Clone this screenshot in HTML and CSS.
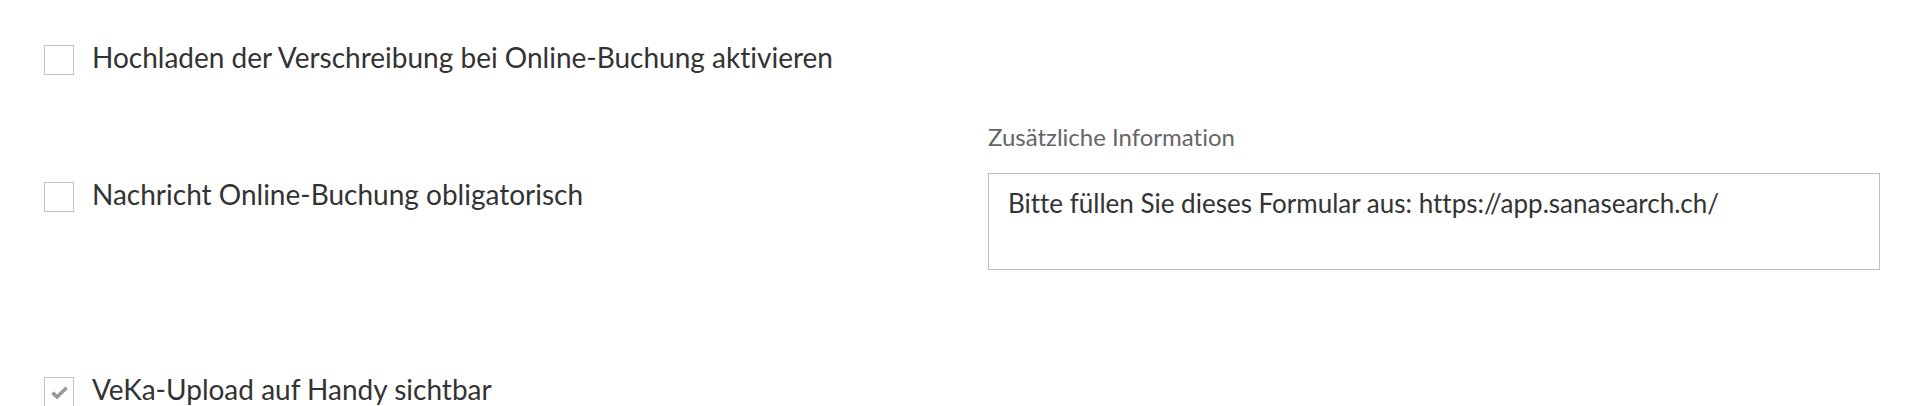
FILE: index.html
```html
<!DOCTYPE html>
<html lang="de">
<head>
    <meta charset="UTF-8">
    <meta name="viewport" content="width=device-width, initial-scale=1.0">
    <title>Online-Buchung Einstellungen</title>
    <link rel="stylesheet" href="styles.css">
</head>
<body>
    <div id="settings">
        <!-- Upload -->
        <div class="row first">
            <label class="check">
                <span class="box"></span>
                <span class="text">Hochladen der Verschreibung bei Online-Buchung aktivieren</span>
            </label>
            <div></div>
        </div>
        <!-- Nachricht -->
        <div class="row second">
            <label class="check">
                <span class="box"></span>
                <span class="text">Nachricht Online-Buchung obligatorisch</span>
            </label>
            <div class="field">
                <label class="field-label" for="info">Zusätzliche Information</label>
                <textarea id="info">Bitte füllen Sie dieses Formular aus: https://app.sanasearch.ch/</textarea>
            </div>
        </div>
        <!-- VeKa -->
        <div class="row third">
            <label class="check">
                <span class="box checked">
                    <svg width="17" height="13" viewBox="0 0 17 13"><path d="M1.5 6.6 L6 11 L15.6 1.8" fill="none" stroke="#999" stroke-width="3.6" stroke-linejoin="miter"/></svg>
                </span>
                <span class="text">VeKa-Upload auf Handy sichtbar</span>
            </label>
            <div></div>
        </div>
    </div>
</body>
</html>
```

FILE: styles.css
```css
/* styles.css */
body {
font-family: Lato, "Open Sans", sans-serif;
font-variant-ligatures: none;
color: #333;
background-color: #fff;
margin: 0;
}

#settings {
padding: 45px 44px 0;
}

.row {
display: grid;
grid-template-columns: 892px 892px;
column-gap: 52px;
align-items: start;
}

.second {
margin-top: 49px;
}

.second .check {
margin-top: 58px;
}

.third {
margin-top: 107px;
}

.check {
display: flex;
align-items: flex-start;
gap: 18px;
}

.box {
width: 30px;
height: 30px;
box-sizing: border-box;
border: 1px solid #c2c2c2;
background-color: #fff;
display: flex;
justify-content: center;
align-items: center;
flex-shrink: 0;
}

.text {
font-size: 28px;
line-height: 28px;
margin-top: -2px;
}

.field-label {
display: block;
font-size: 24px;
line-height: 26px;
color: #666;
margin-bottom: 23px;
}

textarea {
display: block;
width: 892px;
height: 97px;
box-sizing: border-box;
border: 1px solid #bdbdbd;
border-radius: 0;
padding: 16px 19px;
font-family: Lato, "Open Sans", sans-serif;
font-variant-ligatures: none;
font-size: 26px;
line-height: 26px;
color: #333;
resize: none;
outline: none;
}
```
